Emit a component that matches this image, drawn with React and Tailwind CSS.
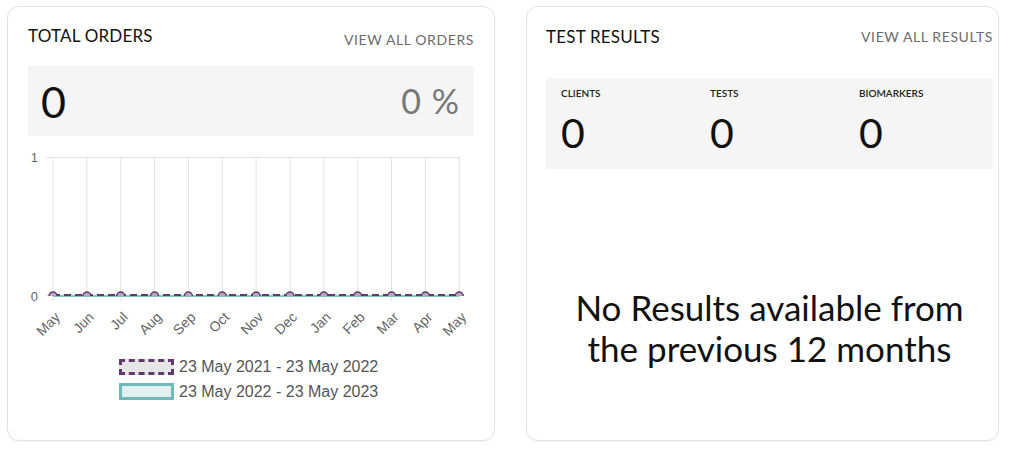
import React from 'react';

const months = ['May', 'Jun', 'Jul', 'Aug', 'Sep', 'Oct', 'Nov', 'Dec', 'Jan', 'Feb', 'Mar', 'Apr', 'May'];

function OrdersChart() {
  const xs = months.map((_, i) => 25 + i * 33.85);
  return (
    <svg width="460" height="205" className="block" style={{ fontFamily: '"Liberation Sans", Arial, sans-serif' }}>
      <defs>
        <clipPath id="plot">
          <rect x="0" y="0" width="460" height="151" />
        </clipPath>
      </defs>
      <line x1="18" y1="12.5" x2="432" y2="12.5" stroke="#e3e3e3" />
      {xs.map((x, i) => (
        <line key={i} x1={x} y1="12" x2={x} y2="156" stroke="#e3e3e3" />
      ))}
      <line x1="18" y1="150.5" x2="25" y2="150.5" stroke="#e3e3e3" />
      <text x="10" y="17" textAnchor="end" fontSize="13" fill="#666">1</text>
      <text x="10" y="155.5" textAnchor="end" fontSize="13" fill="#666">0</text>
      <line x1={xs[0]} y1="151" x2={xs[12]} y2="151" stroke="#86c6c6" strokeWidth="2" />
      <line x1={xs[0]} y1="150" x2={xs[12]} y2="150" stroke="#5f3a6b" strokeWidth="2" strokeDasharray="7 4" />
      <g clipPath="url(#plot)">
        {xs.map((x, i) => (
          <circle key={i} cx={x} cy="151" r="4" fill="#b9a4c2" stroke="#5f3a6b" strokeWidth="1.5" />
        ))}
      </g>
      {months.map((m, i) => (
        <text
          key={i}
          x={xs[i] + 8}
          y="173"
          textAnchor="end"
          fontSize="14"
          fill="#666"
          transform={`rotate(-45 ${xs[i] + 8} 173)`}
        >
          {m}
        </text>
      ))}
    </svg>
  );
}

function TotalOrders() {
  return (
    <div className="w-[488px] h-[435px] rounded-[12px] border border-[#e2e2e2] bg-white px-[20px] shadow-[0_1px_2px_rgba(0,0,0,0.04)]">
      <div className="flex items-start justify-between pt-[19px]">
        <h2 className="text-[17px] leading-[20px] text-[#111] tracking-[0.2px]">TOTAL ORDERS</h2>
        <a className="mt-[5px] text-[14px] leading-[18px] text-[#6b6b6b] tracking-[0.6px]">VIEW ALL ORDERS</a>
      </div>
      <div className="mt-[17px] h-[70px] bg-[#f5f5f5] flex items-center justify-between pl-[13px] pr-[14px]">
        <span className="text-[43px] leading-none text-[#111]">0</span>
        <span className="text-[34px] leading-none text-[#777] tracking-[1px]">0 %</span>
      </div>
      <div className="mt-[9px]">
        <OrdersChart />
      </div>
      <div className="mt-[7px] flex flex-col gap-[6px] pl-[91px] text-[16px] leading-[19px] text-[#555]" style={{ fontFamily: '"Liberation Sans", Arial, sans-serif' }}>
        <div className="flex items-center gap-[5px]">
          <span className="w-[55px] h-[16px] bg-[#e6e6e6] border-[3px] border-dashed border-[#5f3a6b]" />
          <span>23 May 2021 - 23 May 2022</span>
        </div>
        <div className="flex items-center gap-[5px]">
          <span className="w-[55px] h-[17px] bg-[#e1f1f2] border-[3px] border-[#6fb9b9]" />
          <span>23 May 2022 - 23 May 2023</span>
        </div>
      </div>
    </div>
  );
}

function Stat({ label }) {
  return (
    <div className="pl-[15px] pt-[8px]">
      <div className="text-[10px] leading-[14px] font-semibold text-[#222]">{label}</div>
      <div className="mt-[12px] text-[41px] leading-none text-[#111]">0</div>
    </div>
  );
}

function TestResults() {
  return (
    <div className="w-[473px] h-[435px] rounded-[12px] border border-[#e2e2e2] bg-white pl-[19px] pr-[5px] shadow-[0_1px_2px_rgba(0,0,0,0.04)]">
      <div className="flex items-start justify-between pt-[20px]">
        <h2 className="text-[17px] leading-[20px] text-[#111] tracking-[0.2px]">TEST RESULTS</h2>
        <a className="mt-[1px] text-[14px] leading-[18px] text-[#6b6b6b] tracking-[0.6px]">VIEW ALL RESULTS</a>
      </div>
      <div className="mt-[31px] h-[91px] bg-[#f5f5f5] grid grid-cols-3">
        <Stat label="CLIENTS" />
        <Stat label="TESTS" />
        <Stat label="BIOMARKERS" />
      </div>
      <p className="mt-[118px] text-center text-[35px] leading-[41px] text-[#111]">
        No Results available from
        <br />
        the previous 12 months
      </p>
    </div>
  );
}

export default function App() {
  return (
    <div className="w-[1024px] h-[451px] bg-white flex gap-[31px] pl-[7px] pt-[6px]" style={{ fontFamily: 'Lato, "Open Sans", sans-serif' }}>
      <TotalOrders />
      <TestResults />
    </div>
  );
}
